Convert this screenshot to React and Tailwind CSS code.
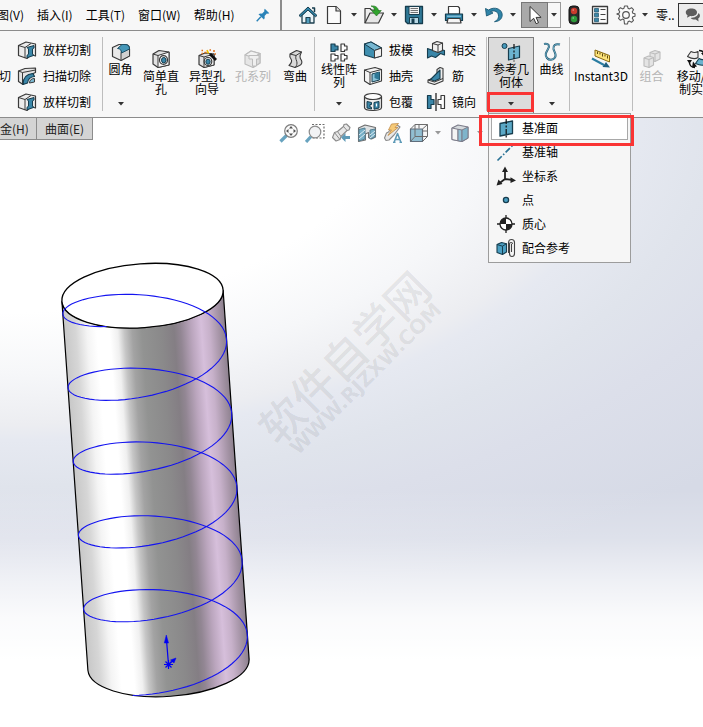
import clsx from 'clsx';
import { useState } from 'react';

const INK = '#3a3a3a';
const BLUE = '#3a86a8';

/* ---------- icons ---------- */

function Icon({ children, className }) {
  return (
    <svg viewBox="0 0 20 20" fill="none" strokeLinejoin="round" aria-hidden="true" className={clsx('shrink-0', className ?? 'size-5')}>
      {children}
    </svg>
  );
}

const CubeBase = ({ stroke = INK, top = '#fafafa', left = '#e2e2e2', right = '#c4c4c4' }) => (
  <g stroke={stroke} strokeWidth="1.1">
    <path d="M2 6l6-4 9 2.500v9.500l-7 4.500-8-3.500z" fill={left} />
    <path d="M2 6l6-4 9 2.500-6 4z" fill={top} />
    <path d="M11 8.500l6-4v9.500l-7 4.500z" fill={right} />
  </g>
);

const HomeIcon = () => (
  <Icon>
    <path d="M4 10v8h12v-8l-6-6z" fill="#e9f3f7" stroke="#1c3f4f" strokeWidth="1.3" />
    <path d="M1 10.500L10 2l9 8.500-1.500 1.200L10 5l-7.500 6.700z" fill="#2f84a8" stroke="#173d4e" />
    <path d="M14 3h2.500v4" stroke="#173d4e" strokeWidth="1.5" />
    <path d="M8 18v-5.500h4V18" fill="#4f9dbd" stroke="#1c3f4f" strokeWidth="1.2" />
  </Icon>
);

const FileIcon = () => (
  <Icon>
    <path d="M3.500 1.500H12l4.500 4.500v12.500h-13z" fill="#fbfbfb" stroke={INK} strokeWidth="1.200" />
    <path d="M12 1.500V6h4.500" fill="#ddd" stroke={INK} strokeWidth="1.200" />
  </Icon>
);

const OpenIcon = () => (
  <Icon>
    <path d="M1 18V3.500h5L7.500 5H14v3.500" fill="#eee" stroke={INK} strokeWidth="1.200" />
    <path d="M1 18L6 8h13.500l-5 10z" fill="#e6e6e6" stroke={INK} strokeWidth="1.200" />
    <path d="M7 1c4-.5 7 1 7.300 4.500h3L12.500 11 7.500 5.500h3.300C10.500 3.300 9.300 1.800 7 1z" fill="#2fa32c" stroke="#1d6b1c" strokeWidth=".6" />
  </Icon>
);

const SaveIcon = () => (
  <Icon>
    <path d="M1.500 1.500h17v17h-15l-2-2z" fill="#2f7896" stroke="#173d4e" strokeWidth="1.300" />
    <path d="M5 1.500h10.500v8H5z" fill="#f3f3f3" stroke="#173d4e" />
    <path d="M6.500 3.500H14M6.500 5.500H14M6.500 7.500H14" stroke="#666" strokeWidth=".9" />
    <path d="M5.500 12.500h9v6h-9z" fill="#b9d8e5" stroke="#173d4e" />
    <path d="M7.500 13.500h3v5h-3z" fill="#173d4e" />
  </Icon>
);

const PrintIcon = () => (
  <Icon>
    <path d="M4.500 9V1.500h9.500l1.500 1.500v6z" fill="#fff" stroke={INK} strokeWidth="1.200" />
    <path d="M1.500 9h17v6.500h-17z" fill="#2f84a8" stroke="#173d4e" strokeWidth="1.200" />
    <path d="M3 11.200h14" stroke="#9fd0e6" />
    <path d="M4 13.500h12l1 4.500H3z" fill="#f5f5f5" stroke={INK} strokeWidth="1.200" />
  </Icon>
);

const UndoIcon = () => (
  <Icon>
    <path d="M1.500 3.500l1 7.500 6.500-3-2.500-1.300c4-2.200 8.500.3 8 5-.2 2.200-1.600 3.800-4 5 4.500-.2 7.500-2.700 7.700-6.500C18.500 4.500 11 .8 4.500 5z" fill="#2f84a8" stroke="#1c5a76" strokeWidth=".9" />
  </Icon>
);

const CursorIcon = () => (
  <Icon>
    <path d="M5 1.500v15l3.700-3.200 2.400 5.400 2.400-1-2.400-5.300h5z" fill="#fff" stroke="#333" />
  </Icon>
);

const TrafficIcon = () => (
  <Icon>
    <rect x="5" y="1" width="10" height="18" rx="3.500" fill="#2c2c2c" stroke="#111" />
    <circle cx="10" cy="6" r="3.200" fill="#c93a2c" />
    <circle cx="10" cy="14" r="3.200" fill="#2c9a3a" />
    <path d="M8.500 5h1.500M8.500 13h1.500" stroke="#fff" strokeOpacity=".6" />
  </Icon>
);

const ListIcon = () => (
  <Icon>
    <path d="M2.500 1.500h15v17h-15z" fill="#fafafa" stroke={INK} strokeWidth="1.300" />
    <path d="M4.500 3.500h4v3.500h-4zM4.500 8.300h4v3.500h-4zM4.500 13.200h4v3.500h-4z" fill={BLUE} stroke="#1c4f66" strokeWidth=".7" />
    <path d="M10.500 4.500h5M10.500 9.500h5M10.500 14.500h5" stroke="#444" />
  </Icon>
);

const GearIcon = () => (
  <Icon>
    <path d="M8.500 1h3l.5 2.200 1.500.7 2-1.200 2 2-1.200 2 .6 1.600 2.100.4v2.600l-2.100.5-.6 1.500 1.200 2-2 2-2-1.200-1.500.7-.5 2.200h-3L8 14.800l-1.500-.7-2 1.200-2-2 1.200-2-.7-1.500-2-.5V8.700l2-.4.700-1.600-1.200-2 2-2 2 1.200L8 3.200z" fill="#fafafa" stroke="#555" strokeWidth="1.100" />
    <circle cx="10" cy="10" r="3.300" stroke="#555" strokeWidth="1.200" />
  </Icon>
);

const ChatIcon = () => (
  <Icon className="size-4">
    <path d="M8 2C4 2 1 4 1 6.800c0 1.500.8 2.700 2.200 3.600L2.500 13.500l4-2.200c4.500.6 8.500-1.400 8.500-4.500C15 4 12 2 8 2z" fill="#5d5d5d" />
    <path d="M17 7.500c2.600 2.500 2 5.500-.5 7l.5 3.500-3.500-2.300c-2.700.3-5-.4-6.500-2 5 0 9-2.400 10-6.200z" fill="#5d5d5d" />
  </Icon>
);

const PinIcon = () => (
  <Icon className="size-3.5">
    <path d="M12.500 1l6.500 6.500-2 .8-1.500-.3-3.300 3.500c.6 2 .2 3.500-.9 5L3.500 9c1.500-1 3-1.500 5-.9L12 4.700l-.3-1.700z" fill="#2a83b8" />
    <path d="M7 12.500L1 19" stroke="#2a83b8" strokeWidth="2" />
  </Icon>
);

const LoftCutIcon = () => (
  <Icon>
    <path d="M1.500 5.500L9 2l9.500 2v12L14 14.500 10 18.500l-8.500-3z" fill="#ececec" stroke={INK} strokeWidth="1.200" />
    <path d="M1.500 5.500L8 7.500 14 3.500" stroke={INK} />
    <path d="M8 7.500v10.500" stroke={INK} />
    <path d="M10 7.500l7-2V8l-1.500.8v5.500l1.500 1-7 2.500v-2.500l1.500-1V9z" fill={BLUE} stroke="#173d4e" />
  </Icon>
);

const SweepCutIcon = () => (
  <Icon>
    <path d="M1.500 5L8 2.500l10.500-.5v4.500L15 8l-9 10.500-4.500-3z" fill="#e4e4e4" stroke={INK} strokeWidth="1.200" />
    <path d="M1.500 5l4 1.500L18.500 4M5.500 6.500v12" stroke={INK} />
    <path d="M6 18.500C6 12 9.500 8 16 7.500l1.500 3C12.500 11 11 13 10.500 17z" fill={BLUE} stroke="#173d4e" strokeWidth="1.200" />
    <path d="M12.500 17c0-3 2-4.500 5-4.500V16z" fill="#7ab9d2" stroke={INK} />
  </Icon>
);

const FilletIcon = () => (
  <Icon>
    <path d="M1.500 5.500L8 2.500h6c3 0 4.500 2 4.500 4.500v7L10 18.500l-8.500-4z" fill="#e9e9e9" stroke={INK} strokeWidth="1.200" />
    <path d="M10 18.500V12c0-3 1-4.500 3-5h5.500v7z" fill="#d0d0d0" stroke={INK} />
    <path d="M6.500 6.500L11 2.500h3c3 0 4.500 1.500 4.500 4.500L10.500 11c0-3-1.500-4.500-4-4.500z" fill="#4597b8" stroke="#1c4f66" />
  </Icon>
);

const HoleIcon = () => (
  <Icon>
    <path d="M2 5L8 1.500 18 3v13l-11 2.500L2 15z" fill="#e2e2e2" stroke={INK} strokeWidth="1.200" />
    <path d="M2 5l5 1.500L18 3v13L7 18.500v-12" fill="#f6f6f6" stroke={INK} />
    <ellipse cx="12.500" cy="11" rx="4" ry="4.400" fill="#fff" stroke={INK} strokeWidth="1.200" />
    <ellipse cx="12.800" cy="11.200" rx="2.300" ry="2.800" fill={BLUE} stroke="#173d4e" />
  </Icon>
);

const HoleWizardIcon = () => (
  <Icon>
    <path d="M2 6.500L8 4l9 1v11l-10 2.500L2 15.500z" fill="#e2e2e2" stroke={INK} strokeWidth="1.200" />
    <path d="M2 6.500L7 8l10-3v11L7 18.500V8" fill="#f6f6f6" stroke={INK} />
    <ellipse cx="11" cy="12.500" rx="3.800" ry="4" fill="#fff" stroke={INK} strokeWidth="1.200" />
    <ellipse cx="11" cy="12.700" rx="2.200" ry="2.600" fill={BLUE} stroke="#173d4e" />
    <path d="M13 5l6 6" stroke="#111" strokeWidth="2.800" />
    <path d="M4.500 1.500h1.500M7.500 3.500h2M12.500 1h1.500M16 2h2M17.500 5h1.500M4.500 4.500h1.500" stroke="#e0701a" strokeWidth="1.700" />
    <path d="M10 1l1.500 3.500" stroke="#f3c200" strokeWidth="1.700" />
  </Icon>
);

const HoleSeriesIcon = () => (
  <Icon>
    <CubeBase stroke="#bcbcbc" top="#f2f2f2" left="#e6e6e6" right="#dcdcdc" />
    <path d="M6 6.500h10v3.500h-2.500v7h-4v-7H6z" fill="#efefef" stroke="#bcbcbc" />
  </Icon>
);

const FlexIcon = () => (
  <Icon>
    <path d="M5 5l6.500-3.500 5 1.500c-2 4-2 5.500 0 8.500.8 2 0 4-2 5L10 18.500l-6-2c3-3 3.500-4.500 2-6.500C4.500 8 4.500 7 5 5z" fill="#dadada" stroke={INK} strokeWidth="1.100" />
    <path d="M5 5l6 1.500L16.500 3M11 6.500c-1 3.500 1 5 1 7.500 0 2-1 3.500-2 4.500" stroke={INK} />
  </Icon>
);

const PatternIcon = () => (
  <Icon>
    <path d="M2 2h4v2h3v4H6v1.500H2z" fill={BLUE} stroke="#173d4e" strokeWidth="1.200" />
    <path d="M12 2h3.500v2H18v4h-2.500v1.500H12zM2 12h4v1.500h3V17H6v2H2zM12 12h3.500v1.500H18V17h-2.500v2H12z" fill="#fff" stroke={INK} strokeWidth="1.200" />
  </Icon>
);

const DraftIcon = () => (
  <Icon>
    <path d="M1.500 4L8 2l10.500 6v8l-7 2-10-3z" fill="#3f8fb0" stroke="#173d4e" strokeWidth="1.100" />
    <path d="M1.500 4l10 6.500 7-2.500L8 2z" fill="#77b7d1" stroke="#173d4e" />
    <path d="M11.500 10.500l7-2.500v8l-7 2z" fill="#efefef" stroke={INK} />
  </Icon>
);

const ShellIcon = () => (
  <Icon>
    <path d="M1.500 4L12 1.500l6.500 2V15L7 18.500 1.500 15z" fill="#f5f5f5" stroke={INK} strokeWidth="1.100" />
    <path d="M1.500 4L7 6.500l11.500-3M7 6.500v12" stroke={INK} />
    <path d="M9 8l7.500-2v8L9 16z" fill="#8cc4da" stroke="#173d4e" />
    <path d="M11.500 7.500l5-1.500v8l-5-2z" fill="#2f7896" />
  </Icon>
);

const WrapIcon = () => (
  <Icon>
    <path d="M1.500 4.500v11c0 4 17 4 17 0v-11z" fill="#ececec" stroke={INK} strokeWidth="1.200" />
    <ellipse cx="10" cy="4.500" rx="8.500" ry="3" fill="#fdfdfd" stroke={INK} strokeWidth="1.200" />
    <path d="M4 9.500l4.500 1v2H7v2.500l1.500.3V17L4 16zM16 9.500l-5 1v6.700l5-1.200z" fill={BLUE} stroke="#173d4e" />
    <path d="M13.500 11.500v3" stroke="#fff" strokeWidth="1.200" />
  </Icon>
);

const IntersectIcon = () => (
  <Icon>
    <path d="M1.500 8.500l4 1.500 4-2 9 2.500v4.500l-4-1.500-5 4-4-1.500-4 2z" fill={BLUE} stroke="#173d4e" strokeWidth="1.100" />
    <path d="M6.500 3.500L11 1.500l5.500 1.500v7.500l-4.500 2-5.500-2z" fill="#f0f0f0" stroke={INK} strokeWidth="1.100" />
    <path d="M6.500 3.500L12 5l4.500-2M12 5v7.500" stroke={INK} />
  </Icon>
);

const RibIcon = () => (
  <Icon>
    <path d="M11 3.500L14 1.500l3 1V15l-8.500 3.500-6.500-2V14l9-3z" fill="#eee" stroke={INK} strokeWidth="1.100" />
    <path d="M14 4L4.500 13.500l4 1.500L14 12.500z" fill={BLUE} stroke="#173d4e" strokeWidth="1.100" />
    <path d="M2 14l6.500 2 8.500-3.500" stroke={INK} />
  </Icon>
);

const MirrorIcon = () => (
  <Icon>
    <path d="M1.500 3.500h3.500v4h3v5H5v4H1.500z" fill={BLUE} stroke="#173d4e" strokeWidth="1.200" />
    <path d="M18.500 3.500H15v4h-3v5h3v4h3.500z" fill="#fff" stroke={INK} strokeWidth="1.200" />
    <path d="M10 1v18" stroke="#111" strokeWidth="1.200" />
  </Icon>
);

const PlaneIcon = () => (
  <Icon>
    <path d="M4 5.500L16.500 3v12.500L4 18z" fill="#5ba8c6" stroke="#173d4e" strokeWidth="1.300" />
    <path d="M10.200 1v18.500" stroke="#111" strokeWidth="1.200" strokeDasharray="5 1.500 2 1.500" />
  </Icon>
);

const RefGeometryIcon = () => (
  <Icon>
    <circle cx="3.500" cy="4" r="2.500" fill="#4698ba" stroke="#173d4e" />
    <path d="M7.500 6.500L18.500 4v11.500l-11 2.500z" fill="#6bb3cf" stroke="#173d4e" strokeWidth="1.200" />
    <path d="M13 2v17.500" stroke="#111" strokeWidth="1.200" strokeDasharray="5 1.500 2 1.500" />
  </Icon>
);

const CurveIcon = () => (
  <Icon>
    <path d="M2 2c5-1 6 2 4 5-2 3.500-3.500 6-1 9 2 2.500 6 2.500 8-.5 2-3.500-1-5.500-1.500-8.500C11 3.500 13 1.500 18 2.500" stroke="#22586f" strokeWidth="2" />
    <path d="M2 2c5-1 6 2 4 5-2 3.500-3.500 6-1 9 2 2.500 6 2.500 8-.5 2-3.500-1-5.500-1.500-8.500C11 3.500 13 1.500 18 2.500" stroke="#7fc0da" strokeWidth=".8" />
  </Icon>
);

const InstantIcon = () => (
  <Icon>
    <path d="M4 1l14.500 5.500v6.500L4 7z" fill="#fbe27a" stroke="#8a6a10" />
    <path d="M6.500 2.500V5M9 3.500v2M11.500 4.500v3M14 5.500v2M16.500 6.500v3" stroke="#5d4a10" />
    <path d="M1 9.500l12 6.500" stroke="#2a7da2" strokeWidth="2" />
    <path d="M19 18.500l-7.500-.5 3.500-5z" fill="#1f6080" />
  </Icon>
);

const CombineIcon = () => (
  <Icon>
    <g fill="#e4e4e4" stroke="#bcbcbc" strokeWidth="1.100">
      <path d="M8 3.500l5-2 5 1.500v7l-5 2.500-5-2z" />
      <path d="M8 3.500l5 1.500 5-2M13 5v7.500" />
      <path d="M2 9l4.500-2 5 1.500v7.500L7 18.500 2 17z" />
      <path d="M2 9l5 1.500 4.500-2M7 10.500v8" />
    </g>
  </Icon>
);

const MoveCopyIcon = () => (
  <Icon>
    <path d="M.5 7.500L4 2.500c3 1.500 4 1.500 7 0v6c-3 2-6 1.500-10.500-1z" fill="#eee" stroke={INK} strokeWidth="1.100" />
    <path d="M8.500 14.500l3.500-5c3 1.500 4 1.500 7.500 0V15c-3 2-6.500 1.500-11-.5z" fill="#6bb3cf" stroke="#173d4e" strokeWidth="1.100" />
    <path d="M12 1.500c3 0 4.500 1 5 3.500M8 18.500c-3 0-5-1.500-5.500-4.500" stroke="#111" strokeWidth="1.500" />
    <path d="M14 4h6l-2.500 4.500zM6 12.500l-1 6 5-1zM0 11h5l-2.500 4z" fill="#111" />
  </Icon>
);

const AxisIcon = () => (
  <Icon>
    <path d="M1.500 18.500L18.500 1.500" stroke="#2a7295" strokeWidth="1.700" strokeDasharray="6 2 1.500 2" />
  </Icon>
);

const CoordIcon = () => (
  <Icon>
    <path d="M9 3v10l8 1M9 13l-6 4.500" stroke="#222" strokeWidth="1.800" />
    <path d="M9 .5L6 6h6zM20 14.500l-5.500-3.200v5.700zM.5 19.500l2-6 4 4.500z" fill="#222" />
  </Icon>
);

const PointIcon = () => (
  <Icon>
    <circle cx="10" cy="10" r="2.600" fill="#4a9fc2" stroke="#173d4e" strokeWidth="1.300" />
  </Icon>
);

const MassIcon = () => (
  <Icon>
    <path d="M10 1v18M1 10h18" stroke="#222" strokeWidth="1.300" />
    <circle cx="10" cy="10" r="6" fill="#fff" stroke="#222" strokeWidth="1.300" />
    <path d="M10 10V4a6 6 0 00-6 6zM10 10v6a6 6 0 006-6z" fill="#222" />
  </Icon>
);

const MateIcon = () => (
  <Icon>
    <path d="M1 6.500l4.500-2 5 1.200V14l-4 2.500L1 14.500z" fill="#4a9fc2" stroke="#173d4e" strokeWidth="1.100" />
    <path d="M1 6.500l5.500 1.700 4-2.500M6.500 8.200v8.300" stroke="#173d4e" />
    <path d="M15.500 6v8M12.500 15V4.500c0-4 6-4 6 0v11c0 4-5 4-5 0V6c0-2 3-2 3 0" stroke="#444" strokeWidth="1.100" />
  </Icon>
);

const ZoomFitIcon = () => (
  <Icon>
    <path d="M1.500 18.500l6-6" stroke="#4e94b4" strokeWidth="3.200" />
    <circle cx="12" cy="8" r="6.300" fill="#fafafa" stroke="#666" strokeWidth="1.200" />
    <path d="M12 3l2 2.500h-4zM12 13l2-2.500h-4zM7 8l2.500-2v4zM17 8l-2.500-2v4z" fill="#333" />
  </Icon>
);

const ZoomAreaIcon = () => (
  <Icon>
    <path d="M7 1.500h12V15H7" stroke="#555" strokeWidth="1.200" strokeDasharray="2 1.500" />
    <path d="M1 19l5-5.500" stroke="#4e94b4" strokeWidth="3.200" />
    <circle cx="10" cy="9" r="5.800" fill="#f0f2f4" stroke="#777" strokeWidth="1.200" />
  </Icon>
);

const PrevViewIcon = () => (
  <Icon>
    <path d="M1.500 14.500l2-5 3-1 6-5 .5-2L15.500 1 19 4.500l-1 2.500-2 .5-6 6-1 3-4 1.500z" fill="#e4e4e4" stroke="#777" strokeWidth="1.100" />
    <path d="M6.500 8.500l3.500 5M12.500 3.500l3.500 4M3.500 9.500l5 6.500" stroke="#777" />
    <path d="M10 14.500L14.500 10v3H19v3h-4.500v3z" fill="#4289ab" />
  </Icon>
);

const SectionIcon = () => (
  <Icon>
    <path d="M1.500 5L8 2l10.500 2.500v9.500l-4 2-3-1.500v-5L8.500 11v6l-7 1.500z" fill="#d9dcde" stroke="#555" strokeWidth="1.100" />
    <path d="M2 6.500l6-1.500v11l-6 2zM13 7l5-1v8l-5 2z" fill="#5fa2bd" stroke="#3a6b80" />
    <path d="M2 12l6-5M2 16l6-5M13 12l5-4M13 15l5-4" stroke="#d5e8f0" />
  </Icon>
);

const DynamicIcon = () => (
  <Icon>
    <path d="M1.500 15l2-5 2-1 4-5 4-2.500L17 4l-6 8-5 5-3 .5z" fill="#e4e4e4" stroke="#777" strokeWidth="1.100" />
    <path d="M8.500 1l7-.5-3.500 4h3L5 12.500 8.500 7H5.500z" fill="#f5c261" stroke="#b8782a" strokeWidth=".8" />
    <path d="M10 19.500h2.500M16.500 19.500H19M11 19.500l3.500-9 3.500 9M12.500 16.500h4" stroke="#4289ab" strokeWidth="1.600" />
  </Icon>
);

const OrientIcon = () => (
  <Icon>
    <path d="M6 1.500h12.500v12L13.500 18.500V6H1.500z" fill="#f6f6f6" />
    <path d="M1.500 6h12v12.500h-12z" fill="#7fb4ca" stroke="#456" strokeWidth="1.200" />
    <path d="M1.500 6L6 1.500h12.500v12L13.500 18.500M13.500 6l5-4.500M6 1.500v12h12.500M1.500 18.500l4.500-5M10 1.500v4M18.500 8h-5" stroke="#555" />
  </Icon>
);

const DisplayIcon = () => (
  <Icon>
    <path d="M2 5l6-3 10 2v11l-6 3.500L2 16.500z" fill="#cfd5d8" stroke="#667" strokeWidth="1.100" />
    <path d="M2 5l6 1.300v11.500l-6-1.300z" fill="#f3f3f3" stroke="#667" />
    <path d="M8 6.300L12 7v11.500l-4-.7z" fill="#7fb9d0" stroke="#667" />
    <path d="M12 7l6-3v11l-6 3.500z" fill="#69a9c3" stroke="#667" />
  </Icon>
);

/* ---------- small pieces ---------- */

const Caret = ({ className }) => (
  <svg viewBox="0 0 6 4" aria-hidden="true" className={clsx('h-1 w-1.5 shrink-0', className ?? 'text-[#333]')}>
    <path d="M0 0h6L3 3.500z" fill="currentColor" />
  </svg>
);

const Separator = () => <div className="my-1.5 w-px shrink-0 bg-[#bdbdbd]" />;

function BigButton({ icon, lines, caret, disabled, className }) {
  return (
    <button
      type="button"
      disabled={disabled}
      className={clsx(
        'flex shrink-0 flex-col items-center',
        caret ? 'pt-[11px]' : 'pt-[18px]',
        disabled ? 'text-[#b5b5b5]' : 'text-black',
        className
      )}
    >
      {icon}
      <span className="flex flex-col whitespace-nowrap leading-[13px]">
        {lines.map((line) => (
          <span key={line}>{line}</span>
        ))}
      </span>
      {caret && <Caret className="mt-auto mb-[11px] text-[#333]" />}
    </button>
  );
}

function SmallColumn({ items, className }) {
  return (
    <div className={clsx('flex shrink-0 flex-col pt-1.5', className)}>
      {items.map(({ icon, label }, i) => (
        <button key={`${label}-${i}`} type="button" className="flex h-[26px] items-center gap-1.5 whitespace-nowrap">
          {icon}
          {label}
        </button>
      ))}
    </div>
  );
}

function ToolPair({ icon, label, className }) {
  return (
    <div className="flex shrink-0 items-center">
      <button type="button" aria-label={label}>{icon}</button>
      <button type="button" aria-label={`${label} ▾`} className={clsx('flex h-5 items-center justify-center', className ?? 'w-5')}>
        <Caret />
      </button>
    </div>
  );
}

/* ---------- bars ---------- */

const MENUS = ['图(V)', '插入(I)', '工具(T)', '窗口(W)', '帮助(H)'];

function TopBar() {
  return (
    <header className="flex h-[31px] shrink-0 border-b border-[#8c8c8c]">
      <nav className="-ml-[3px] flex w-[285px] shrink-0 items-center gap-[13px] border-r-2 border-[#8c8c8c]">
        {MENUS.map((m) => (
          <button key={m} type="button" className="whitespace-nowrap">{m}</button>
        ))}
        <button type="button" aria-label="固定" className="mr-2.5 ml-auto">
          <PinIcon />
        </button>
      </nav>

      <div className="flex shrink-0 items-center pl-4">
        <button type="button" aria-label="主页" className="mr-1.5"><HomeIcon /></button>
        <ToolPair icon={<FileIcon />} label="新建" />
        <ToolPair icon={<OpenIcon />} label="打开" />
        <ToolPair icon={<SaveIcon />} label="保存" />
        <ToolPair icon={<PrintIcon />} label="打印" />
        <ToolPair icon={<UndoIcon />} label="撤销" className="w-[17px]" />
        <button type="button" aria-label="选择" className="flex h-[26px] w-[27px] items-center justify-center border border-[#777] bg-[#a9a9a9]">
          <CursorIcon />
        </button>
        <button type="button" aria-label="选择 ▾" className="flex h-[26px] w-[13px] items-center justify-center border border-l-0 border-[#999]">
          <Caret />
        </button>
        <button type="button" aria-label="重建模型" className="ml-[3px]"><TrafficIcon /></button>
        <button type="button" aria-label="文件属性" className="ml-1.5"><ListIcon /></button>
        <div className="ml-1.5">
          <ToolPair icon={<GearIcon />} label="选项" className="w-[18px]" />
        </div>
        <span className="ml-0.5 w-[22px] whitespace-nowrap">零..</span>
        <button type="button" aria-label="搜索" className="flex h-6 w-12 items-center border border-[#333] bg-[#ececec] pl-1.5">
          <ChatIcon />
        </button>
      </div>
    </header>
  );
}

const GEOMETRY_ITEMS = [
  { label: '基准面', icon: <PlaneIcon /> },
  { label: '基准轴', icon: <AxisIcon /> },
  { label: '坐标系', icon: <CoordIcon /> },
  { label: '点', icon: <PointIcon /> },
  { label: '质心', icon: <MassIcon /> },
  { label: '配合参考', icon: <MateIcon /> },
];

function ReferenceGeometry() {
  const [active, setActive] = useState('基准面');

  return (
    <div className="relative mt-1.5 ml-px w-[46px] shrink-0">
      <button type="button" aria-haspopup="menu" aria-expanded="true" className="flex h-[77px] w-full flex-col items-center border border-[#7d7d7d] bg-[#dcdcdc] pt-1">
        <RefGeometryIcon />
        <span className="w-9 text-center leading-[13px]">参考几何体</span>
        <span className="mt-auto flex h-[19px] items-center justify-center self-stretch">
          <Caret />
        </span>
      </button>

      <ul role="menu" className="absolute top-[76px] left-0 z-10 w-[143px] border border-[#9c9c9c] bg-[#f6f6f6] p-0.5">
        {GEOMETRY_ITEMS.map(({ label, icon }) => (
          <li key={label}>
            <button
              type="button"
              role="menuitem"
              onMouseEnter={() => setActive(label)}
              className={clsx(
                'flex h-6 w-full items-center gap-1.5 border pl-1',
                active === label ? 'border-[#a8a8a8] bg-white' : 'border-transparent'
              )}
            >
              {icon}
              {label}
            </button>
          </li>
        ))}
      </ul>

      {/* callouts round the drop-down arrow and the first entry */}
      <div className="pointer-events-none absolute top-[55px] -left-px z-20 h-5 w-[47px] border-3 border-[#fa3434]" />
      <div className="pointer-events-none absolute top-[78px] -left-[9px] z-20 h-[31px] w-[155px] border-3 border-[#fa3434]" />
    </div>
  );
}

function Ribbon() {
  return (
    <div className="flex h-[87px] shrink-0 border-b border-[#8c8c8c]">
      <span className="w-[17px] shrink-0 -indent-px pt-[38px] leading-[13px]">切</span>
      <SmallColumn
        className="w-[85px]"
        items={[
          { icon: <LoftCutIcon />, label: '放样切割' },
          { icon: <SweepCutIcon />, label: '扫描切除' },
          { icon: <LoftCutIcon />, label: '放样切割' },
        ]}
      />
      <Separator />
      <BigButton icon={<FilletIcon />} lines={['圆角']} caret className="w-[35px]" />
      <BigButton icon={<HoleIcon />} lines={['简单直', '孔']} className="w-[46px]" />
      <BigButton icon={<HoleWizardIcon />} lines={['异型孔', '向导']} className="w-[46px]" />
      <BigButton icon={<HoleSeriesIcon />} lines={['孔系列']} disabled className="w-[46px]" />
      <BigButton icon={<FlexIcon />} lines={['弯曲']} className="w-[38px]" />
      <Separator />
      <BigButton icon={<PatternIcon />} lines={['线性阵', '列']} caret className="w-12" />
      <SmallColumn
        className="w-[63px]"
        items={[
          { icon: <DraftIcon />, label: '拔模' },
          { icon: <ShellIcon />, label: '抽壳' },
          { icon: <WrapIcon />, label: '包覆' },
        ]}
      />
      <SmallColumn
        className="w-[60px]"
        items={[
          { icon: <IntersectIcon />, label: '相交' },
          { icon: <RibIcon />, label: '筋' },
          { icon: <MirrorIcon />, label: '镜向' },
        ]}
      />
      <Separator />
      <ReferenceGeometry />
      <BigButton icon={<CurveIcon />} lines={['曲线']} caret className="w-[35px]" />
      <Separator />
      <BigButton icon={<InstantIcon />} lines={['Instant3D']} className="w-[62px]" />
      <Separator />
      <BigButton icon={<CombineIcon />} lines={['组合']} disabled className="w-[37px]" />
      <BigButton icon={<MoveCopyIcon />} lines={['移动/复', '制实体']} className="w-[54px]" />
    </div>
  );
}

/* ---------- graphics area ---------- */

// Cylinder in view coordinates: an ellipse swept along a slightly tilted axis
const RX = 80.8;
const RY = 32;
const TILT = (4 * Math.PI) / 180;
const BASE = { x: 168.5, y: 664.7 };
const AXIS = { x: -26, y: -369 };
const TURNS = 5;
const START = (118 * Math.PI) / 180;

function helixPath() {
  const steps = TURNS * 72;
  const pts = [];
  for (let i = 0; i <= steps; i++) {
    const k = i / steps;
    const u = START - k * TURNS * 2 * Math.PI;
    const x = BASE.x + AXIS.x * k + RX * Math.cos(u) * Math.cos(TILT) + RY * Math.sin(u) * Math.sin(TILT);
    const y = BASE.y + AXIS.y * k - RX * Math.cos(u) * Math.sin(TILT) + RY * Math.sin(u) * Math.cos(TILT);
    pts.push(`${x.toFixed(1)} ${y.toFixed(1)}`);
  }
  return `M${pts.join('L')}`;
}

const SHADES = [
  [0, '#c8c8c8'], [0.07, '#d6d6d6'], [0.14, '#f4f4f4'], [0.2, '#ffffff'], [0.28, '#ffffff'],
  [0.33, '#f0f0f0'], [0.37, '#c6c6c6'], [0.42, '#a3a3a3'], [0.48, '#929392'], [0.6, '#8a898a'],
  [0.68, '#847e84'], [0.72, '#928693'], [0.79, '#bba6be'], [0.85, '#d6bfdb'], [0.9, '#c7b1ca'],
  [0.96, '#a493a5'], [1, '#8d818e'],
];

function Model() {
  return (
    <svg viewBox="50 250 210 460" className="absolute top-[132px] left-[50px] h-[460px] w-[210px]" fill="none" aria-label="圆柱与螺旋线">
      <defs>
        <linearGradient id="body" gradientUnits="userSpaceOnUse" x1="41" y1="0" x2="202.500" y2="0" gradientTransform="skewX(4.03)">
          {SHADES.map(([offset, color]) => (
            <stop key={offset} offset={offset} stopColor={color} />
          ))}
        </linearGradient>
      </defs>
      <path d="M61.900 301.300L87.900 670.300A80.800 32 -4 0 0 249.100 659.100L223.100 290.100A80.800 32 -4 0 1 61.900 301.300z" fill="url(#body)" stroke="#000" strokeWidth="1.200" />
      <ellipse cx="142.500" cy="295.700" rx="80.800" ry="32" transform="rotate(-4 142.500 295.700)" fill="#fff" stroke="#000" strokeWidth="1.300" />
      <path d={helixPath()} stroke="#1414f0" strokeWidth="1.100" />
      <g stroke="#0000f5" strokeWidth="1.200">
        <path d="M168.500 664.500L166.500 640M168.500 664.500l5-4M164 664.500h9M168.500 660v9M165.500 661.500l6 6M171.500 661.500l-6 6" />
        <path d="M166.300 635l2.200 8h-4.200zM176 658l-2 5-3.500-3z" fill="#0000f5" strokeWidth=".5" />
      </g>
    </svg>
  );
}

function HudButton({ children, label, className }) {
  return (
    <button type="button" aria-label={label} className={clsx('flex h-5 items-center justify-center', className ?? 'w-[26px]')}>
      {children}
    </button>
  );
}

function GraphicsArea() {
  return (
    <main className="relative flex-1 bg-[linear-gradient(to_bottom,#ffffff00_61%,#ffffff33_69%,#ffffff99_76%,#ffffffe0_82%,#fff_89%),radial-gradient(ellipse_141%_84%_at_0%_0%,#fff_38%,#f6f7f9_50%,#ecedf1_60%,#e6e9f1_63%,#e0e4ec_72%,#dcdfea_82%,#d6dae6_100%)]">
      <div className="flex items-start">
        <div className="flex h-[22px] shrink-0 border-b border-[#8c8c8c] bg-[#d4d4d4] text-[#222]">
          <button type="button" className="w-[37px] border-r border-[#8c8c8c] text-left">金(H)</button>
          <button type="button" className="w-14 border-r border-[#8c8c8c]">曲面(E)</button>
        </div>
        <div className="ml-[183px] flex shrink-0 pt-[5px] opacity-85">
          <HudButton label="整屏显示全图"><ZoomFitIcon /></HudButton>
          <HudButton label="局部放大"><ZoomAreaIcon /></HudButton>
          <HudButton label="上一视图"><PrevViewIcon /></HudButton>
          <HudButton label="剖面视图"><SectionIcon /></HudButton>
          <HudButton label="动态注解视图"><DynamicIcon /></HudButton>
          <HudButton label="视图定向"><OrientIcon /></HudButton>
          <HudButton label="视图定向 ▾" className="w-3"><Caret className="text-[#888]" /></HudButton>
          <HudButton label="显示样式" className="w-8"><DisplayIcon /></HudButton>
          <HudButton label="显示样式 ▾" className="w-2"><Caret className="text-[#888]" /></HudButton>
        </div>
      </div>

      <Model />

      {/* watermark */}
      <div className="pointer-events-none absolute top-[213px] left-[230px] flex w-[240px] -rotate-45 flex-col items-center whitespace-nowrap text-black/8">
        <span className="text-[44px] leading-11 font-medium">软件自学网</span>
        <span className="font-['DejaVu_Sans',sans-serif] text-[20px] leading-5 font-bold">WWW.RJZXW.COM</span>
      </div>
    </main>
  );
}

export default function App() {
  return (
    <div className="flex min-h-screen flex-col overflow-hidden bg-[#f7f7f7] font-['Noto_Sans_CJK_SC',sans-serif] text-xs text-black">
      <TopBar />
      <Ribbon />
      <GraphicsArea />
    </div>
  );
}
